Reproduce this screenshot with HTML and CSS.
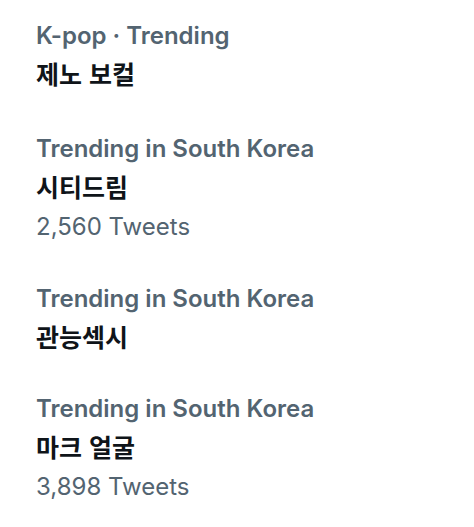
FILE: index.html
```html
<!DOCTYPE html>
<html lang="ko">
<head>
<meta charset="utf-8">
<link rel="stylesheet" href="styles.css">
</head>
<body>
<main class="trends">
  <section class="trend trend-first">
    <div class="meta">K-pop · Trending</div>
    <div class="name">제노 보컬</div>
  </section>
  <section class="trend">
    <div class="meta">Trending in South Korea</div>
    <div class="name">시티드림</div>
    <div class="count">2,560 Tweets</div>
  </section>
  <section class="trend">
    <div class="meta">Trending in South Korea</div>
    <div class="name">관능섹시</div>
  </section>
  <section class="trend">
    <div class="meta">Trending in South Korea</div>
    <div class="name">마크 얼굴</div>
    <div class="count">3,898 Tweets</div>
  </section>
</main>
</body>
</html>
```
FILE: styles.css
```css
html, body {
  margin: 0;
  padding: 0;
  background: #ffffff;
}
body {
  font-family: Inter, "Noto Sans CJK KR", sans-serif;
}
.trends {
  display: flex;
  flex-direction: column;
  padding-top: 16px;
}
.trend {
  display: flex;
  flex-direction: column;
  padding: 0 0 32px 36px;
}
.trend-first {
  padding-bottom: 35px;
}
.meta {
  font-size: 24px;
  line-height: 40px;
  font-weight: 600;
  color: #536471;
}
.name {
  font-family: "Noto Sans CJK KR", sans-serif;
  font-size: 25px;
  line-height: 34px;
  margin-bottom: 4px;
  font-weight: 700;
  color: #0f1419;
}
.count {
  font-size: 24px;
  line-height: 40px;
  font-weight: 400;
  color: #536471;
}
```
